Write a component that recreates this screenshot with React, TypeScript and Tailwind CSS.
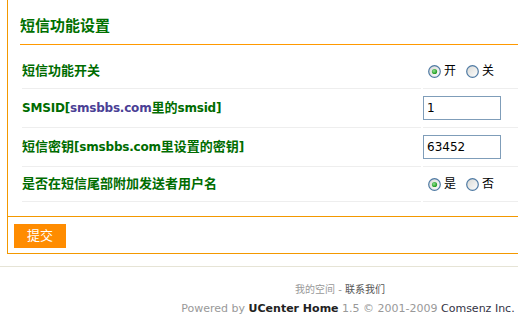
import React from 'react';

const cjk = '"DejaVu Sans", "Noto Sans CJK SC", sans-serif';

function Radio({ checked }: { checked?: boolean }) {
    return (
        <svg width="13" height="13" viewBox="0 0 13 13" className="shrink-0">
            <defs>
                <linearGradient id="rg" x1="0" y1="0" x2="1" y2="1">
                    <stop offset="0" stopColor="#d8d8d4" />
                    <stop offset="1" stopColor="#ffffff" />
                </linearGradient>
                <radialGradient id="dot" cx="0.4" cy="0.4" r="0.6">
                    <stop offset="0" stopColor="#8fe08f" />
                    <stop offset="1" stopColor="#1d9a1d" />
                </radialGradient>
            </defs>
            <circle cx="6.5" cy="6.5" r="5.8" fill="url(#rg)" stroke="#4f7aa3" strokeWidth="1.2" />
            {checked && <circle cx="6.5" cy="6.5" r="2.6" fill="url(#dot)" />}
        </svg>
    );
}

function RadioPair({ a, b }: { a: string; b: string }) {
    return (
        <div className="flex items-center pl-[5px] text-[12px] text-black">
            <Radio checked />
            <span className="ml-[3px]">{a}</span>
            <span className="ml-[10px] flex items-center">
                <Radio />
                <span className="ml-[3px]">{b}</span>
            </span>
        </div>
    );
}

function Row({ label, h, children }: { label: React.ReactNode; h: string; children: React.ReactNode }) {
    return (
        <div className="flex gap-[2px]">
            <div className={`w-[399px] ${h} flex items-center border-b border-[#eeeeee] text-[13px] font-bold text-[#006c00]`}>
                {label}
            </div>
            <div className={`flex-1 ${h} flex items-center border-b border-[#eeeeee]`}>{children}</div>
        </div>
    );
}

function TextBox({ value }: { value: string }) {
    return (
        <input
            defaultValue={value}
            className="w-[78px] h-[24px] border border-[#7f9db9] px-[3px] text-[12px] text-black outline-none"
            style={{ fontFamily: cjk }}
        />
    );
}

// latin text a bit smaller than the CJK glyphs
const L = ({ children, className = '' }: { children: React.ReactNode; className?: string }) => (
    <span className={`text-[12px] tracking-[-0.2px] ${className}`}>{children}</span>
);

export default function App() {
    return (
        <div className="w-[518px] h-[319px] overflow-hidden bg-white" style={{ fontFamily: cjk }}>
            <div className="pl-[7px]">
                <div className="border-l border-b border-[#f39800]">
                    {/* 标题 */}
                    <div className="ml-3 pt-[17px] pb-[9px] border-b border-[#ff9900] text-[15px] leading-[18px] font-bold text-[#007000]">
                        短信功能设置
                    </div>

                    {/* 设置表格 */}
                    <div className="ml-[14px] mt-[9px]">
                        <Row label="短信功能开关" h="h-[35px]">
                            <RadioPair a="开" b="关" />
                        </Row>
                        <Row
                            label={
                                <span>
                                    <L>SMSID[</L>
                                    <L className="text-[#4b3f95]">smsbbs.com</L>里的<L>smsid]</L>
                                </span>
                            }
                            h="h-[39px]"
                        >
                            <TextBox value="1" />
                        </Row>
                        <Row
                            label={
                                <span>
                                    短信密钥<L>[smsbbs.com</L>里设置的密钥<L>]</L>
                                </span>
                            }
                            h="h-[39px]"
                        >
                            <TextBox value="63452" />
                        </Row>
                        <Row label="是否在短信尾部附加发送者用户名" h="h-[35px]">
                            <RadioPair a="是" b="否" />
                        </Row>
                    </div>

                    {/* 提交 */}
                    <div className="mt-[14px] border-t border-[#f39800] pt-[6px] pb-[5px] pl-[6px]">
                        <button className="w-[52px] h-[24px] bg-[#ff8c00] text-white text-[13px]">提交</button>
                    </div>
                </div>
            </div>

            {/* 页脚 */}
            <div className="mt-[12px] border-t border-[#e6e4d6] pt-[13px]">
                <div className="ml-[178px] w-[340px] flex flex-col items-center text-[11px] leading-[19px] text-[#999999] whitespace-nowrap">
                    <div className="pr-[16px] text-[10px]">
                        我的空间 - <span className="text-[#555555]">联系我们</span>
                    </div>
                    <div>
                        Powered by <span className="font-bold text-[#222222]">UCenter Home</span> 1.5 © 2001-2009{' '}
                        <span className="text-[#333344]">Comsenz Inc.</span>
                    </div>
                </div>
            </div>
        </div>
    );
}
